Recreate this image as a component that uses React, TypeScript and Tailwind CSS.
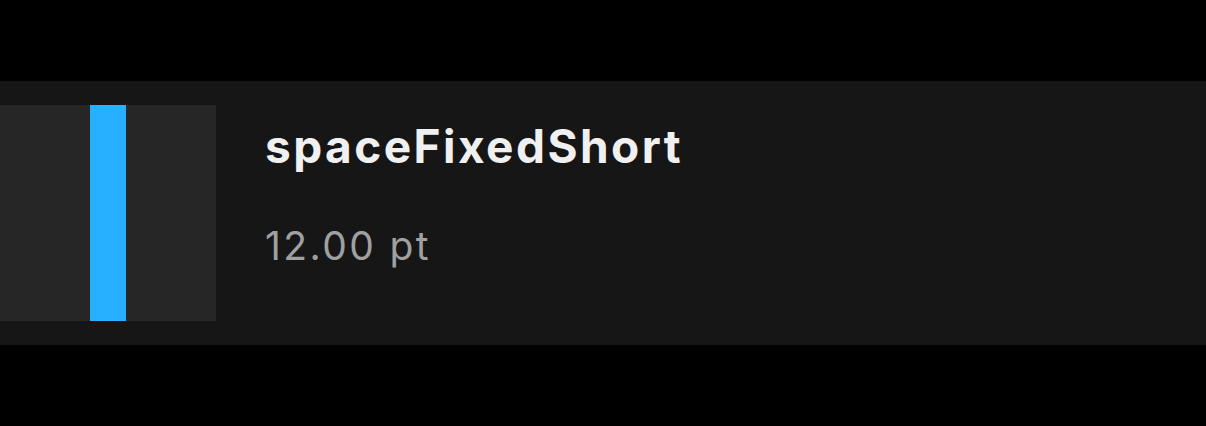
const App = () => {
  return (
    <div className="h-[426px] w-[1206px] bg-black pt-[81px]" style={{ fontFamily: "Inter, 'Noto Sans', sans-serif" }}>
      <div className="flex h-[264px] items-center bg-[#161616]">
        <div className="flex h-[216px] w-[216px] shrink-0 bg-[#262626]">
          <div className="ml-[90px] h-full w-[36px] bg-[#27b0ff]" />
        </div>
        <div className="ml-[49px] flex flex-col self-start pt-[42px]">
          <span className="text-[46px] font-bold leading-none tracking-[0.053em] text-[#f0f0f0]">
            spaceFixedShort
          </span>
          <span className="mt-[57px] text-[39px] leading-none tracking-[0.062em] text-[#a0a0a0]">12.00 pt</span>
        </div>
      </div>
    </div>
  );
};

export default App;
